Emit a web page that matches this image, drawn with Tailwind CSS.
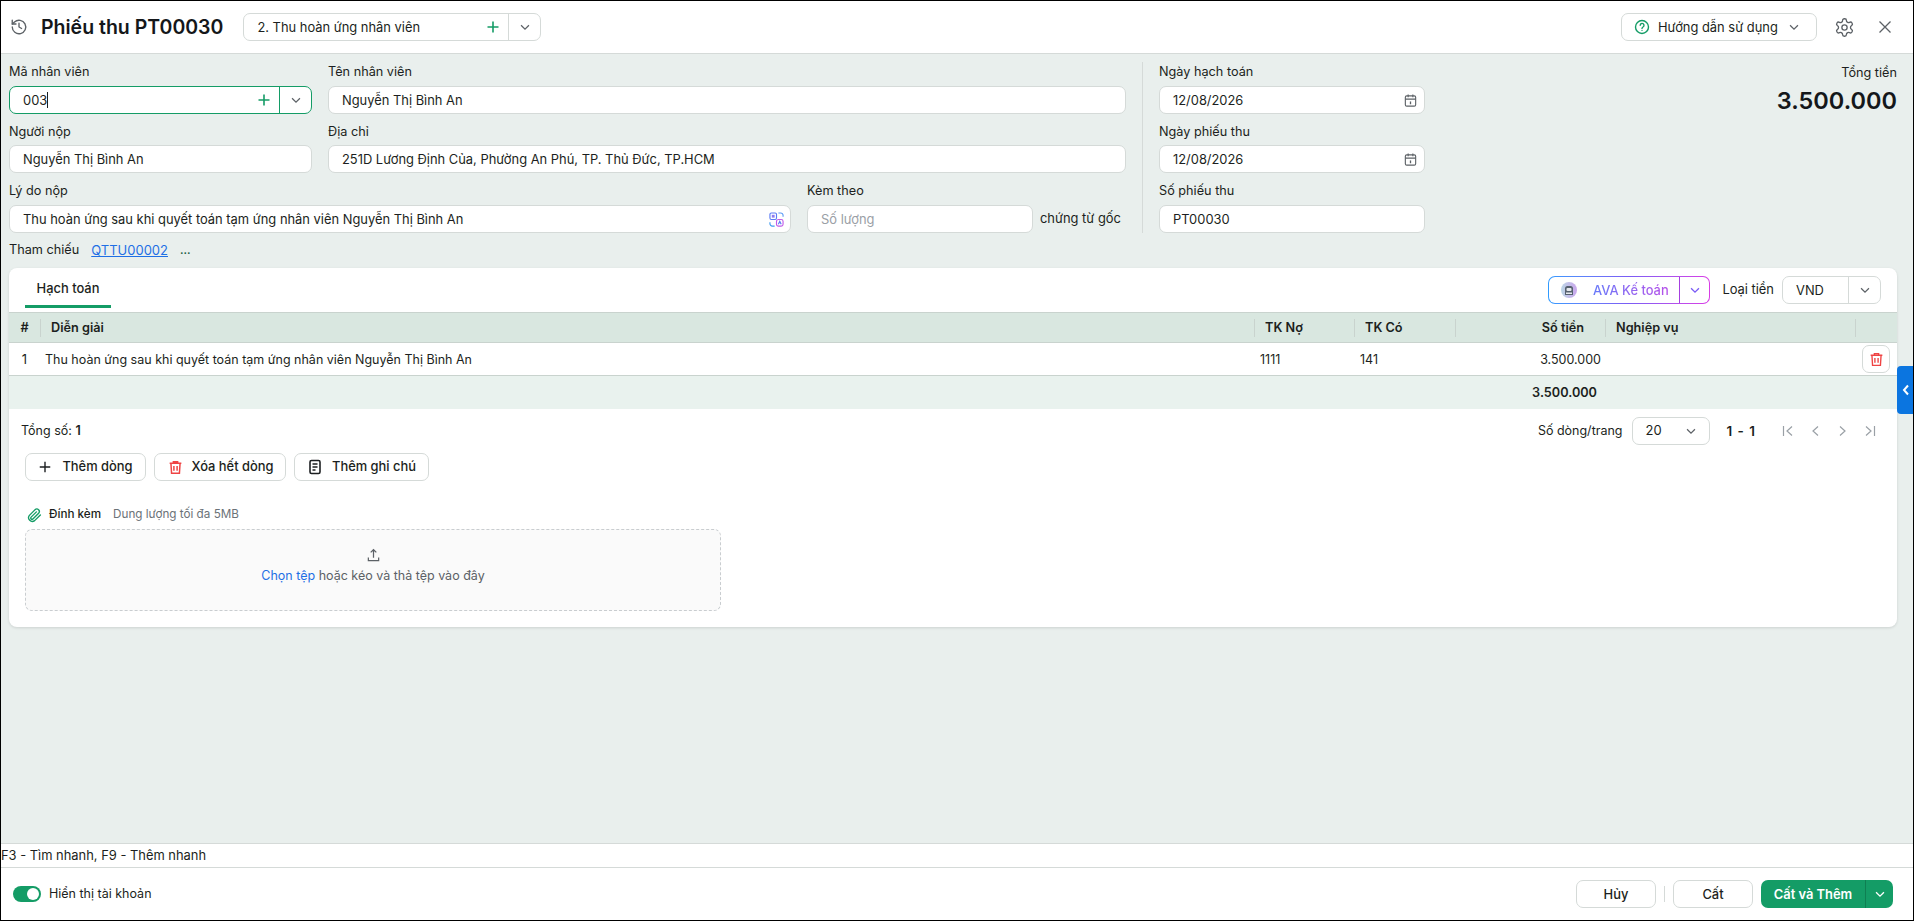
<!DOCTYPE html>
<html lang="vi">
<head>
    <meta charset="UTF-8">
    <title>Phiếu thu PT00030</title>
    <script src="https://cdn.jsdelivr.net/npm/@tailwindcss/browser@4"></script>
</head>
<body class="bg-white">
    <div class="relative w-[1914px] h-[921px] flex flex-col border border-black overflow-hidden font-['Inter',sans-serif] text-[12.9px] text-[#1c1f21] bg-[#e9efed]">

        <!-- Header -->
        <header class="h-[52px] shrink-0 bg-white border-b border-[#d5dad8] box-content flex items-center pl-[9px]">
            <svg class="w-[18px] h-[18px] text-[#5c6166]" viewBox="0 0 24 24" fill="none" stroke="currentColor" stroke-width="1.800" stroke-linecap="round" stroke-linejoin="round"><path d="M3 12a9 9 0 1 0 3-6.700L3 8"/><path d="M3 3v5h5"/><path d="M12 7v5l3.500 2"/></svg>
            <h1 class="ml-[13px] text-[19.5px] leading-[28px] font-semibold text-[#14171a]">Phiếu thu PT00030</h1>
            <div class="ml-[20px] w-[298px] h-[28px] flex items-center bg-white border border-[#d5dad8] rounded-[7px]">
                <span class="flex-1 pl-[13px] pt-[1px]">2. Thu hoàn ứng nhân viên</span>
                <svg class="w-[16px] h-[16px] text-[#149c66] mr-[7px]" viewBox="0 0 16 16" fill="none" stroke="currentColor" stroke-width="1.600"><path d="M8 2.500v11M2.500 8h11"/></svg>
                <span class="w-[32px] h-full flex items-center justify-center border-l border-[#d5dad8]">
                    <svg class="w-[14px] h-[14px] text-[#5c6166]" viewBox="0 0 16 16" fill="none" stroke="currentColor" stroke-width="1.400"><path d="M3.500 6l4.500 4.500L12.500 6"/></svg>
                </span>
            </div>
            <div class="ml-auto w-[196px] h-[28px] flex items-center bg-white border border-[#d5dad8] rounded-[7px] pl-[12px]">
                <svg class="w-[16px] h-[16px] text-[#149c66]" viewBox="0 0 16 16" fill="none" stroke="currentColor" stroke-width="1.400"><circle cx="8" cy="8" r="6.500"/><path d="M6.200 6.300a1.900 1.900 0 1 1 2.800 1.700c-.7.400-1 .8-1 1.500" stroke-linecap="round"/><path d="M8 11.100v.7"/></svg>
                <span class="ml-[8px] pt-[1px]">Hướng dẫn sử dụng</span>
                <svg class="w-[14px] h-[14px] text-[#5c6166] ml-[9px]" viewBox="0 0 16 16" fill="none" stroke="currentColor" stroke-width="1.400"><path d="M3.500 6l4.500 4.500L12.500 6"/></svg>
            </div>
            <svg class="w-[21px] h-[21px] text-[#5c6166] ml-[17px]" viewBox="0 0 24 24" fill="none" stroke="currentColor" stroke-width="1.500" stroke-linecap="round" stroke-linejoin="round"><path d="M12.220 2h-.44a2 2 0 0 0-2 2v.18a2 2 0 0 1-1 1.730l-.43.250a2 2 0 0 1-2 0l-.15-.08a2 2 0 0 0-2.730.730l-.22.380a2 2 0 0 0 .730 2.730l.15.100a2 2 0 0 1 1 1.720v.510a2 2 0 0 1-1 1.740l-.15.090a2 2 0 0 0-.730 2.730l.22.380a2 2 0 0 0 2.730.730l.15-.08a2 2 0 0 1 2 0l.43.250a2 2 0 0 1 1 1.730V20a2 2 0 0 0 2 2h.44a2 2 0 0 0 2-2v-.18a2 2 0 0 1 1-1.730l.43-.250a2 2 0 0 1 2 0l.15.08a2 2 0 0 0 2.730-.730l.22-.390a2 2 0 0 0-.730-2.730l-.15-.080a2 2 0 0 1-1-1.740v-.500a2 2 0 0 1 1-1.740l.15-.090a2 2 0 0 0 .730-2.730l-.22-.380a2 2 0 0 0-2.730-.730l-.15.080a2 2 0 0 1-2 0l-.43-.250a2 2 0 0 1-1-1.730V4a2 2 0 0 0-2-2z"/><circle cx="12" cy="12" r="3"/></svg>
            <svg class="w-[16px] h-[16px] text-[#5c6166] ml-[22px] mr-[20px]" viewBox="0 0 16 16" fill="none" stroke="currentColor" stroke-width="1.300"><path d="M2.500 2.500l11 11M13.500 2.500l-11 11"/></svg>
        </header>

        <main class="flex-1 min-h-0 pl-[8px] pr-[16px] flex flex-col">
            <!-- Form -->
            <section class="flex h-[180px] shrink-0">
                <div class="w-[1117px] shrink-0 pt-[8px]">
                    <div class="flex gap-[16px]">
                        <div class="w-[303px] shrink-0">
                            <label class="block h-[20px] leading-[20px] mb-[4px] text-[12.7px]">Mã nhân viên</label>
                            <div class="h-[28px] flex items-center bg-white border border-[#149c66] rounded-[7px]">
                                <span class="flex-1 pl-[13px] pt-[1px] flex items-center">003<span class="w-px h-[16px] bg-[#1c1f21]"></span></span>
                                <svg class="w-[16px] h-[16px] text-[#149c66] mr-[7px]" viewBox="0 0 16 16" fill="none" stroke="currentColor" stroke-width="1.600"><path d="M8 2.500v11M2.500 8h11"/></svg>
                                <span class="w-[32px] h-full flex items-center justify-center border-l border-[#149c66]">
                                    <svg class="w-[14px] h-[14px] text-[#5c6166]" viewBox="0 0 16 16" fill="none" stroke="currentColor" stroke-width="1.400"><path d="M3.500 6l4.500 4.500L12.500 6"/></svg>
                                </span>
                            </div>
                        </div>
                        <div class="flex-1">
                            <label class="block h-[20px] leading-[20px] mb-[4px] text-[12.7px]">Tên nhân viên</label>
                            <div class="h-[28px] flex items-center bg-white border border-[#d5dad8] rounded-[7px] pl-[13px] pt-[1px]">Nguyễn Thị Bình An</div>
                        </div>
                    </div>
                    <div class="flex gap-[16px] mt-[8px]">
                        <div class="w-[303px] shrink-0">
                            <label class="block h-[20px] leading-[20px] mb-[3px] text-[12.7px]">Người nộp</label>
                            <div class="h-[28px] flex items-center bg-white border border-[#d5dad8] rounded-[7px] pl-[13px] pt-[1px]">Nguyễn Thị Bình An</div>
                        </div>
                        <div class="flex-1">
                            <label class="block h-[20px] leading-[20px] mb-[3px] text-[12.7px]">Địa chỉ</label>
                            <div class="h-[28px] flex items-center bg-white border border-[#d5dad8] rounded-[7px] pl-[13px] pt-[1px]">251D Lương Định Của, Phường An Phú, TP. Thủ Đức, TP.HCM</div>
                        </div>
                    </div>
                    <div class="flex gap-[16px] mt-[8px]">
                        <div class="w-[782px] shrink-0">
                            <label class="block h-[20px] leading-[20px] mb-[4px] text-[12.7px]">Lý do nộp</label>
                            <div class="h-[28px] flex items-center justify-between bg-white border border-[#d5dad8] rounded-[7px] pr-[6px] pl-[13px]">
                                <span class="pt-[1px]">Thu hoàn ứng sau khi quyết toán tạm ứng nhân viên Nguyễn Thị Bình An</span>
                                <svg class="w-[15px] h-[15px]" viewBox="0 0 16 16" fill="none" stroke-width="1.200"><rect x="1" y="1" width="7" height="7" rx="1.500" stroke="#5b7cf5"/><rect x="3" y="3" width="3" height="3" fill="#8f7cf0"/><path d="M10 1h2.500A2.500 2.500 0 0 1 15 3.500V5" stroke="#5b9cf5"/><rect x="8" y="8" width="7" height="7" rx="2" stroke="#c05be8"/><path d="M10 13l1.500-3 1.500 3" stroke="#5b7cf5"/><path d="M1 11v1.500A2.500 2.500 0 0 0 3.500 15H6" stroke="#3f9cf0"/></svg>
                            </div>
                        </div>
                        <div class="w-[226px] shrink-0">
                            <label class="block h-[20px] leading-[20px] mb-[4px] text-[12.7px]">Kèm theo</label>
                            <div class="h-[28px] flex items-center bg-white border border-[#d5dad8] rounded-[7px] pl-[13px] pt-[1px] text-[#9aa0a6]">Số lượng</div>
                        </div>
                        <span class="self-end h-[28px] leading-[28px] -ml-[9px] whitespace-nowrap">chứng từ gốc</span>
                    </div>
                </div>

                <div class="ml-[16px] mt-[8px] h-[171px] w-px bg-[#d5dad8] shrink-0"></div>

                <div class="ml-[16px] w-[266px] shrink-0 pt-[8px]">
                    <label class="block h-[20px] leading-[20px] mb-[4px] text-[12.7px]">Ngày hạch toán</label>
                    <div class="h-[28px] flex items-center justify-between bg-white border border-[#d5dad8] rounded-[7px] pl-[13px] pr-[6px]">
                        <span class="pt-[1px]">12/08/2026</span>
                        <svg class="w-[15px] h-[15px] text-[#5c6166]" viewBox="0 0 16 16" fill="none" stroke="currentColor" stroke-width="1.200"><rect x="2.500" y="3" width="11" height="11" rx="1.500"/><path d="M2.500 6.500h11M5.500 1.500v3M10.500 1.500v3"/><path d="M8 9v3" stroke-width="1.400"/></svg>
                    </div>
                    <label class="block h-[20px] leading-[20px] mb-[3px] mt-[8px] text-[12.7px]">Ngày phiếu thu</label>
                    <div class="h-[28px] flex items-center justify-between bg-white border border-[#d5dad8] rounded-[7px] pl-[13px] pr-[6px]">
                        <span class="pt-[1px]">12/08/2026</span>
                        <svg class="w-[15px] h-[15px] text-[#5c6166]" viewBox="0 0 16 16" fill="none" stroke="currentColor" stroke-width="1.200"><rect x="2.500" y="3" width="11" height="11" rx="1.500"/><path d="M2.500 6.500h11M5.500 1.500v3M10.500 1.500v3"/><path d="M8 9v3" stroke-width="1.400"/></svg>
                    </div>
                    <label class="block h-[20px] leading-[20px] mb-[4px] mt-[8px] text-[12.7px]">Số phiếu thu</label>
                    <div class="h-[28px] flex items-center bg-white border border-[#d5dad8] rounded-[7px] pl-[13px] pt-[1px]">PT00030</div>
                </div>

                <div class="flex-1 pt-[9px] text-right">
                    <div class="h-[20px] leading-[20px] text-[12.7px]">Tổng tiền</div>
                    <div class="mt-[2px] text-[23.5px] leading-[32px] font-semibold text-[#14171a]">3.500.000</div>
                </div>
            </section>

            <!-- Tham chieu -->
            <div class="h-[34px] shrink-0 pt-[6px] flex items-start gap-[12px] leading-[20px] text-[12.7px]">
                <span>Tham chiếu</span>
                <a class="text-[#1f6fe5] underline text-[13px]">QTTU00002</a>
                <span class="text-[#1c5f45] text-[11px] font-semibold">...</span>
            </div>

            <!-- Card -->
            <section class="h-[359px] shrink-0 bg-white rounded-[8px] shadow-[0_1px_3px_rgba(0,0,0,0.12)] overflow-hidden">
                <div class="h-[44px] flex items-start pl-[16px] pr-[16px]">
                    <div class="w-[86px] h-[40px] border-b-[3px] border-[#149c66] text-center pt-[9px] leading-[24px] font-medium">Hạch toán</div>
                    <div class="ml-auto mt-[8px] w-[162px] h-[28px] p-px rounded-[7px] bg-linear-to-r from-[#2f9bff] via-[#7b5cf5] to-[#d93be6]">
                        <div class="h-full flex items-center bg-white rounded-[6px]">
                            <svg class="ml-[12px] w-[16px] h-[16px]" viewBox="0 0 16 16"><defs><linearGradient id="ava" x1="0" x2="1"><stop offset="0" stop-color="#bcd6e6"/><stop offset="1" stop-color="#c9a6ec"/></linearGradient></defs><circle cx="8" cy="8" r="8" fill="url(#ava)"/><path d="M4 13V6.500A2.500 2.500 0 0 1 6.500 4h3A2.500 2.500 0 0 1 12 6.500V13z" fill="#56616f"/><rect x="5.500" y="6" width="5" height="3" rx="1" fill="#e6e9ee"/><rect x="5" y="10.500" width="6" height="1.500" fill="#e6e9ee"/></svg>
                            <span class="ml-[11px] w-[85px] pt-[1px] text-center bg-linear-to-r from-[#5e7bfa] to-[#b84be8] bg-clip-text text-transparent font-medium whitespace-nowrap">AVA Kế toán</span>
                            <span class="ml-auto w-[30px] h-full flex items-center justify-center border-l border-[#a63fe0]">
                                <svg class="w-[14px] h-[14px] text-[#7b5cf5]" viewBox="0 0 16 16" fill="none" stroke="currentColor" stroke-width="1.500"><path d="M3.500 6l4.500 4.500L12.500 6"/></svg>
                            </span>
                        </div>
                    </div>
                    <span class="ml-[12px] mt-[9px] h-[28px] leading-[26px] whitespace-nowrap">Loại tiền</span>
                    <div class="ml-[8px] mt-[8px] w-[99px] h-[28px] flex items-center bg-white border border-[#d5dad8] rounded-[7px]">
                        <span class="flex-1 pl-[13px] pt-[1px]">VND</span>
                        <span class="w-[32px] h-full flex items-center justify-center border-l border-[#d5dad8]">
                            <svg class="w-[14px] h-[14px] text-[#5c6166]" viewBox="0 0 16 16" fill="none" stroke="currentColor" stroke-width="1.400"><path d="M3.500 6l4.500 4.500L12.500 6"/></svg>
                        </span>
                    </div>
                </div>

                <!-- Table -->
                <div class="h-[31px] grid grid-cols-[31px_1214px_100px_101px_150px_250px_42px] items-center bg-[#d9e7e0] border-y border-[#c9d3ce] font-semibold text-[12.7px]">
                    <div class="text-center">#</div>
                    <div class="h-[18px] flex items-center border-l border-[#c9d3ce] pl-[10px]">Diễn giải</div>
                    <div class="h-[18px] flex items-center border-l border-[#c9d3ce] pl-[10px]">TK Nợ</div>
                    <div class="h-[18px] flex items-center border-l border-[#c9d3ce] pl-[10px]">TK Có</div>
                    <div class="h-[18px] flex items-center justify-end border-l border-[#c9d3ce] pr-[21px]">Số tiền</div>
                    <div class="h-[18px] flex items-center border-l border-[#c9d3ce] pl-[10px]">Nghiệp vụ</div>
                    <div class="h-[18px] border-l border-[#c9d3ce]"></div>
                </div>
                <div class="h-[33px] grid grid-cols-[31px_1214px_100px_101px_150px_250px_42px] items-center border-b border-[#c9d3ce] text-[12.5px]">
                    <div class="text-center text-[13px] pt-[2px]">1</div>
                    <div class="pl-[5px] pt-[2px]">Thu hoàn ứng sau khi quyết toán tạm ứng nhân viên Nguyễn Thị Bình An</div>
                    <div class="pl-[6px] pt-[2px]">1111</div>
                    <div class="pl-[6px] pt-[2px]">141</div>
                    <div class="text-right pr-[4px] pt-[2px]">3.500.000</div>
                    <div></div>
                    <div class="flex pl-[7px]">
                        <span class="w-[28px] h-[28px] shrink-0 flex items-center justify-center bg-white border border-[#d5dad8] rounded-[7px]">
                            <svg class="w-[17px] h-[17px] text-[#ef4444]" viewBox="0 0 16 16" fill="none" stroke="currentColor" stroke-width="1.300"><path d="M2.500 4h11M6 4V2.500h4V4M3.700 4l.6 9.500h7.400l.6-9.500M6.500 6.500v4.500M9.500 6.500v4.500"/></svg>
                        </span>
                    </div>
                </div>
                <div class="h-[33px] grid grid-cols-[31px_1214px_100px_101px_150px_250px_42px] items-center bg-[#e9f2ee] font-semibold text-[12.7px]">
                    <div></div><div></div><div></div><div></div>
                    <div class="text-right pr-[8px] pt-[1px]">3.500.000</div>
                </div>

                <!-- Pagination -->
                <div class="mt-[8px] h-[28px] flex items-center pl-[12px] pr-[21px] text-[12.5px]">
                    <span>Tổng số: <b class="font-semibold">1</b></span>
                    <span class="ml-auto">Số dòng/trang</span>
                    <div class="ml-[9px] w-[78px] h-[28px] flex items-center justify-between bg-white border border-[#d5dad8] rounded-[7px] pl-[13px] pr-[11px] text-[13px]">
                        <span>20</span>
                        <svg class="w-[14px] h-[14px] text-[#5c6166]" viewBox="0 0 16 16" fill="none" stroke="currentColor" stroke-width="1.400"><path d="M3.500 6l4.500 4.500L12.500 6"/></svg>
                    </div>
                    <span class="ml-[17px] w-[31px] font-semibold text-[13.5px] tracking-[1px] whitespace-nowrap">1 - 1</span>
                    <div class="ml-[24px] flex gap-[15.5px] text-[#9aa0a6]">
                        <svg class="w-[12px] h-[14px]" viewBox="0 0 12 14" fill="none" stroke="currentColor" stroke-width="1.200"><path d="M1.500 2v10M10 2.500L5 7l5 4.500"/></svg>
                        <svg class="w-[12px] h-[14px]" viewBox="0 0 12 14" fill="none" stroke="currentColor" stroke-width="1.200"><path d="M9 2.500L4 7l5 4.500"/></svg>
                        <svg class="w-[12px] h-[14px]" viewBox="0 0 12 14" fill="none" stroke="currentColor" stroke-width="1.200"><path d="M3 2.500L8 7l-5 4.500"/></svg>
                        <svg class="w-[12px] h-[14px]" viewBox="0 0 12 14" fill="none" stroke="currentColor" stroke-width="1.200"><path d="M2 2.500L7 7l-5 4.500M10.500 2v10"/></svg>
                    </div>
                </div>

                <!-- Actions -->
                <div class="mt-[8px] h-[28px] pl-[16px] flex gap-[8px]">
                    <button class="w-[121px] h-[28px] flex items-center justify-center gap-[10px] bg-white border border-[#d5dad8] rounded-[7px] font-medium">
                        <svg class="w-[14px] h-[14px]" viewBox="0 0 16 16" fill="none" stroke="currentColor" stroke-width="1.600"><path d="M8 2v12M2 8h12"/></svg>
                        Thêm dòng
                    </button>
                    <button class="w-[132px] h-[28px] flex items-center justify-center gap-[8px] bg-white border border-[#d5dad8] rounded-[7px] font-medium">
                        <svg class="w-[17px] h-[17px] text-[#ef4444]" viewBox="0 0 16 16" fill="none" stroke="currentColor" stroke-width="1.400"><path d="M2.500 4h11M6 4V2.500h4V4M3.700 4l.6 9.500h7.400l.6-9.500M6.500 6.500v4.500M9.500 6.500v4.500"/></svg>
                        Xóa hết dòng
                    </button>
                    <button class="w-[135px] h-[28px] flex items-center justify-center gap-[9px] bg-white border border-[#d5dad8] rounded-[7px] font-medium">
                        <svg class="w-[16px] h-[16px]" viewBox="0 0 16 16" fill="none" stroke="currentColor" stroke-width="1.600"><rect x="3" y="1.500" width="10" height="13" rx="1.500"/><path d="M5.500 5h5M5.500 8h5M5.500 11h3"/></svg>
                        Thêm ghi chú
                    </button>
                </div>

                <!-- Attachment -->
                <div class="mt-[25px] pl-[16px] h-[18px] flex items-center text-[11.7px]">
                    <svg class="w-[15px] h-[15px] ml-[2px] text-[#149c66]" viewBox="0 0 24 24" fill="none" stroke="currentColor" stroke-width="2.200" stroke-linecap="round" stroke-linejoin="round"><path d="M21.400 11.100l-9.200 9.100a6 6 0 0 1-8.400-8.400l9.200-9.200a4 4 0 0 1 5.600 5.700l-9.200 9.200a2 2 0 0 1-2.800-2.900l8.500-8.400"/></svg>
                    <span class="ml-[7px] font-medium">Đính kèm</span>
                    <span class="ml-[12px] text-[#6b7278]">Dung lượng tối đa 5MB</span>
                </div>
                <div class="mt-[5px] ml-[16px] w-[696px] h-[82px] flex flex-col items-center bg-[#fafafa] border border-dashed border-[#c9cdd0] rounded-[7px]">
                    <svg class="mt-[18px] w-[15px] h-[15px] text-[#5c6166]" viewBox="0 0 16 16" fill="none" stroke="currentColor" stroke-width="1.300"><path d="M8 10.500V2M5 4.700L8 1.800l3 2.900M2.500 10v3.500h11V10"/></svg>
                    <div class="mt-[3px] text-[#5c6166] leading-[20px] text-[12.5px]"><span class="text-[#1f6fe5]">Chọn tệp</span> hoặc kéo và thả tệp vào đây</div>
                </div>
            </section>
        </main>

        <!-- Hint bar -->
        <div class="h-[25px] shrink-0 bg-white border-y border-[#d5dad8] flex items-center text-[12.9px]">F3 - Tìm nhanh, F9 - Thêm nhanh</div>

        <!-- Footer -->
        <footer class="h-[52px] shrink-0 bg-white flex items-center pl-[12px] pr-[20px]">
            <span class="w-[28px] h-[16px] flex items-center justify-end rounded-full bg-[#149c66] pr-[2px]">
                <span class="w-[12px] h-[12px] rounded-full bg-white"></span>
            </span>
            <span class="ml-[8px] text-[12.5px]">Hiển thị tài khoản</span>
            <button class="ml-auto w-[80px] h-[28px] pt-[1px] bg-white border border-[#d5dad8] rounded-[7px] font-medium">Hủy</button>
            <span class="ml-[8px] w-px h-[16px] bg-[#d5dad8]"></span>
            <button class="ml-[8px] w-[80px] h-[28px] pt-[1px] bg-white border border-[#d5dad8] rounded-[7px] font-medium">Cất</button>
            <div class="ml-[8px] w-[132px] h-[28px] flex items-center bg-[#149c66] rounded-[7px] text-white font-semibold">
                <span class="flex-1 text-center pt-[1px]">Cất và Thêm</span>
                <span class="w-[28px] h-full flex items-center justify-center border-l border-[#0f7f52]">
                    <svg class="w-[14px] h-[14px]" viewBox="0 0 16 16" fill="none" stroke="currentColor" stroke-width="1.500"><path d="M3.500 6l4.500 4.500L12.500 6"/></svg>
                </span>
            </div>
        </footer>

        <!-- Side handle -->
        <div class="absolute right-[-1px] top-[365px] w-[17px] h-[48px] bg-[#0b75e0] rounded-l-[4px] flex items-center justify-center">
            <svg class="w-[8px] h-[12px] text-white" viewBox="0 0 8 12" fill="none" stroke="currentColor" stroke-width="2"><path d="M6 1.500L2 6l4 4.500"/></svg>
        </div>
    </div>
</body>
</html>
